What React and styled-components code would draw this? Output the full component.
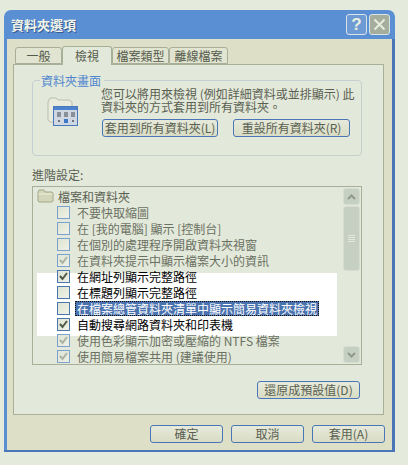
import React from 'react';
import styled, { createGlobalStyle } from 'styled-components';

const GlobalStyle = createGlobalStyle`
  html, body {
    margin: 0;
    padding: 0;
    background: #e4ebdc;
  }
  body {
    width: 408px;
    height: 465px;
    overflow: hidden;
    font-family: "Noto Sans CJK TC", "Liberation Sans", sans-serif;
  }
`;

const rows = [
  { label: '不要快取縮圖' },
  { label: '在 [我的電腦] 顯示 [控制台]' },
  { label: '在個別的處理程序開啟資料夾視窗' },
  { label: '在資料夾提示中顯示檔案大小的資訊', checked: true },
  { label: '在網址列顯示完整路徑', checked: true, bright: true },
  { label: '在標題列顯示完整路徑', bright: true },
  { label: '在檔案總管資料夾清單中顯示簡易資料夾檢視', bright: true, selected: true },
  { label: '自動搜尋網路資料夾和印表機', checked: true, bright: true },
  { label: '使用色彩顯示加密或壓縮的 NTFS 檔案', checked: true },
  { label: '使用簡易檔案共用 (建議使用)', checked: true },
];

const FolderIcon = () => (
  <svg width="17" height="14" viewBox="0 0 17 14">
    <path d="M1 3 L2 1 H7 L8 3 H15 L16 4 V12 L15 13 H2 L1 12 Z" fill="#d3d6b8" stroke="#a3a78c" />
    <path d="M1.5 5 H15.5" stroke="#eef0dc" />
  </svg>
);

const ViewIcon = () => (
  <svg width="32" height="29" viewBox="0 0 32 29">
    <path d="M1 5 L3 1 H9 L11 3 H22 L25 5 V10 H12 V25 H3 L1 23 Z" fill="#e9ecdc" stroke="#b8bdb0" />
    <rect x="6.5" y="9.5" width="24" height="19" fill="#cfd8e2" stroke="#4a78bc" />
    <rect x="7" y="10" width="23" height="3" fill="#4d82cc" />
    <rect x="10" y="15" width="4" height="5" fill="#8a9098" />
    <rect x="17" y="15" width="4" height="5" fill="#8a9098" />
    <rect x="24" y="15" width="4" height="5" fill="#8a9098" />
    <rect x="11" y="23" width="2" height="2" fill="#70767c" />
    <rect x="17" y="22" width="4" height="4" fill="#3f78c8" />
    <rect x="25" y="23" width="2" height="2" fill="#70767c" />
  </svg>
);

const Check = ({ bright }) => (
  <svg width="9" height="9" viewBox="0 0 9 9">
    <path
      d="M1 4 L3.5 7 L8 1"
      fill="none"
      stroke={bright ? '#4e5a46' : '#a9b2a4'}
      strokeWidth="2"
    />
  </svg>
);

const Arrow = ({ up }) => (
  <svg width="9" height="6" viewBox="0 0 9 6">
    <path d={up ? 'M1 5 L4.5 1.5 L8 5' : 'M1 1 L4.5 4.5 L8 1'} fill="none" stroke="#8f9a8c" strokeWidth="2" />
  </svg>
);

export default function App() {
  return (
    <>
      <GlobalStyle />
      <Dialog>
        <TitleBar>
          <TitleText>資料夾選項</TitleText>
          <TitleButtons>
            <HelpButton>?</HelpButton>
            <CloseButton>
              <svg width="13" height="13" viewBox="0 0 13 13">
                <path d="M1.5 1.5 L11.5 11.5 M11.5 1.5 L1.5 11.5" stroke="#e8ecdc" strokeWidth="2" />
              </svg>
            </CloseButton>
          </TitleButtons>
        </TitleBar>

        <DialogBody>
          <Tabs>
            <Tab $width={47}>一般</Tab>
            <Tab $width={50} $active>檢視</Tab>
            <Tab $width={57}>檔案類型</Tab>
            <Tab $width={59}>離線檔案</Tab>
          </Tabs>

          <Panel>
            <GroupBox>
              <Legend>資料夾畫面</Legend>
              <IconCell>
                <ViewIcon />
              </IconCell>
              <GroupContent>
                <Description>
                  您可以將用來檢視 (例如詳細資料或並排顯示) 此
                  <br />
                  資料夾的方式套用到所有資料夾。
                </Description>
                <ButtonRow>
                  <Button $width={116}>套用到所有資料夾(L)</Button>
                  <Button $width={117}>重設所有資料夾(R)</Button>
                </ButtonRow>
              </GroupContent>
            </GroupBox>

            <SectionLabel>進階設定:</SectionLabel>

            <TreeBox>
              <TreeList>
                <WhiteBlock />
                <TreeRoot>
                  <FolderIcon />
                  <span>檔案和資料夾</span>
                </TreeRoot>
                {rows.map(row => (
                  <TreeRow key={row.label}>
                    <CheckBox $bright={row.bright}>
                      {row.checked && <Check bright={row.bright} />}
                    </CheckBox>
                    <RowLabel $bright={row.bright} $selected={row.selected}>
                      {row.label}
                    </RowLabel>
                  </TreeRow>
                ))}
              </TreeList>
              <ScrollBar>
                <ScrollButton>
                  <Arrow up />
                </ScrollButton>
                <ScrollThumb>
                  <Grip />
                  <Grip />
                  <Grip />
                  <Grip />
                </ScrollThumb>
                <ScrollTrack />
                <ScrollButton>
                  <Arrow />
                </ScrollButton>
              </ScrollBar>
            </TreeBox>

            <RestoreRow>
              <Button $width={103}>還原成預設值(D)</Button>
            </RestoreRow>
          </Panel>

          <Footer>
            <Button $width={73}>確定</Button>
            <Button $width={73}>取消</Button>
            <Button $width={73}>套用(A)</Button>
          </Footer>
        </DialogBody>
      </Dialog>
    </>
  );
}

const Dialog = styled.div`
  display: flex;
  flex-direction: column;
  width: 391px;
  height: 442px;
  margin: 10px 0 0 4px;
  box-sizing: border-box;
  border-radius: 7px 7px 0 0;
  background: #5b8fd4;
  border-bottom: 2px solid #4a76b8;
`;

const TitleBar = styled.div`
  display: flex;
  align-items: center;
  justify-content: space-between;
  flex: 0 0 29px;
  padding: 0 5px 0 7px;
`;

const TitleText = styled.div`
  color: #f2f5ea;
  font-size: 13px;
  font-weight: 700;
  text-shadow: 1px 1px 0 #35598f;
`;

const TitleButtons = styled.div`
  display: flex;
  gap: 2px;
`;

const HelpButton = styled.div`
  display: flex;
  align-items: center;
  justify-content: center;
  width: 21px;
  height: 21px;
  box-sizing: border-box;
  border: 1px solid #d8e4e8;
  border-radius: 3px;
  background: #6f9bd4;
  color: #e8eee0;
  font-family: "Liberation Sans", sans-serif;
  font-size: 17px;
  font-weight: 700;
`;

const CloseButton = styled(HelpButton)`
  background: #a5ad9c;
`;

const DialogBody = styled.div`
  flex: 1;
  margin: 0 3px;
  padding: 8px 9px 8px 6px;
  background: #dde0c6;
  box-shadow: 3px 0 0 #4a76b8;
  min-height: 0;
`;

const Tabs = styled.div`
  display: flex;
  align-items: flex-end;
  height: 17px;
  padding-left: 2px;
`;

const Tab = styled.div`
  display: flex;
  align-items: center;
  justify-content: center;
  box-sizing: border-box;
  width: ${p => p.$width}px;
  height: ${p => (p.$active ? 19 : 17)}px;
  margin-bottom: ${p => (p.$active ? -1 : 0)}px;
  position: relative;
  z-index: ${p => (p.$active ? 1 : 0)};
  border: 1px solid #a8ae98;
  border-bottom: ${p => (p.$active ? 'none' : '1px solid #a8ae98')};
  border-radius: 3px 3px 0 0;
  background: ${p => (p.$active ? '#e3e9da' : '#e0e4d0')};
  color: #555b4c;
  font-size: 12px;
  line-height: 1;
`;

const Panel = styled.div`
  box-sizing: border-box;
  width: 371px;
  height: 351px;
  padding: 15px 22px 0 18px;
  border: 1px solid #a8ae98;
  background: #e3e9da;
`;

const GroupBox = styled.div`
  position: relative;
  display: flex;
  box-sizing: border-box;
  width: 330px;
  height: 76px;
  border: 1px solid #c5ced0;
  border-radius: 4px;
`;

const Legend = styled.div`
  position: absolute;
  top: -7px;
  left: 7px;
  padding: 0 3px 0 1px;
  background: #e3e9da;
  color: #4f86cf;
  font-size: 12px;
  line-height: 13px;
`;

const IconCell = styled.div`
  flex: 0 0 68px;
  padding: 16px 0 0 14px;
  box-sizing: border-box;
`;

const GroupContent = styled.div`
  display: flex;
  flex-direction: column;
  padding-top: 6px;
`;

const Description = styled.div`
  color: #5a6052;
  font-size: 12px;
  line-height: 13px;
  white-space: nowrap;
`;

const ButtonRow = styled.div`
  display: flex;
  gap: 15px;
  margin-top: 6px;
  margin-left: 1px;
`;

const Button = styled.div`
  display: flex;
  align-items: center;
  justify-content: center;
  box-sizing: border-box;
  width: ${p => p.$width}px;
  height: 18px;
  border: 1px solid #4a76b8;
  border-radius: 3px;
  background: linear-gradient(#e6eadb, #d9dcc4);
  color: #5a6052;
  font-size: 12px;
  line-height: 1;
  white-space: nowrap;
`;

const SectionLabel = styled.div`
  margin-top: 7px;
  height: 23px;
  color: #5a6052;
  font-size: 12px;
  line-height: 23px;
`;

const TreeBox = styled.div`
  display: flex;
  justify-content: space-between;
  box-sizing: border-box;
  width: 330px;
  height: 179px;
  padding: 1px;
  border: 1px solid #a8ae98;
`;

const TreeList = styled.div`
  position: relative;
  width: 305px;
`;

/* the white patch sits behind the rows and does not line up with them */
const WhiteBlock = styled.div`
  position: absolute;
  top: 85px;
  left: 3px;
  width: 300px;
  height: 63px;
  background: #ffffff;
`;

const TreeRoot = styled.div`
  position: relative;
  display: flex;
  align-items: center;
  gap: 4px;
  height: 16px;
  padding-left: 3px;
  color: #5a6052;
  font-size: 12px;
`;

const TreeRow = styled.div`
  position: relative;
  display: flex;
  align-items: center;
  gap: 6px;
  height: 16px;
  padding-left: 23px;
`;

const CheckBox = styled.div`
  display: flex;
  align-items: center;
  justify-content: center;
  box-sizing: border-box;
  width: 13px;
  height: 13px;
  border: 1px solid ${p => (p.$bright ? '#4a76b0' : '#7ba2cf')};
  background: linear-gradient(135deg, #dfe4d2, #eef1e6);
`;

const RowLabel = styled.span`
  display: block;
  box-sizing: border-box;
  height: 15px;
  padding: 0 1px;
  font-size: 12px;
  line-height: 13px;
  white-space: nowrap;
  color: ${p => (p.$selected ? '#ffffff' : p.$bright ? '#000000' : '#6a7062')};
  background: ${p => (p.$selected ? '#4a72ae' : 'transparent')};
  border: 1px ${p => (p.$selected ? 'dotted #101010' : 'solid transparent')};
  margin-left: -1px;
`;

const ScrollBar = styled.div`
  display: flex;
  flex-direction: column;
  width: 17px;
  gap: 1px;
`;

const ScrollButton = styled.div`
  display: flex;
  align-items: center;
  justify-content: center;
  box-sizing: border-box;
  height: 17px;
  border: 1px solid #d6ddd0;
  border-radius: 3px;
  background: #c5cfc2;
`;

const ScrollThumb = styled.div`
  display: flex;
  flex-direction: column;
  align-items: center;
  justify-content: center;
  gap: 1px;
  box-sizing: border-box;
  height: 65px;
  border: 1px solid #d6ddd0;
  border-radius: 3px;
  background: #c5cfc2;
`;

const Grip = styled.div`
  width: 7px;
  height: 1px;
  background: #e2e8dc;
`;

const ScrollTrack = styled.div`
  flex: 1;
`;

const RestoreRow = styled.div`
  display: flex;
  justify-content: flex-end;
  margin-top: 16px;
  margin-right: 1px;
`;

const Footer = styled.div`
  display: flex;
  justify-content: flex-end;
  gap: 8px;
  margin-top: 10px;
  width: 372px;
`;
